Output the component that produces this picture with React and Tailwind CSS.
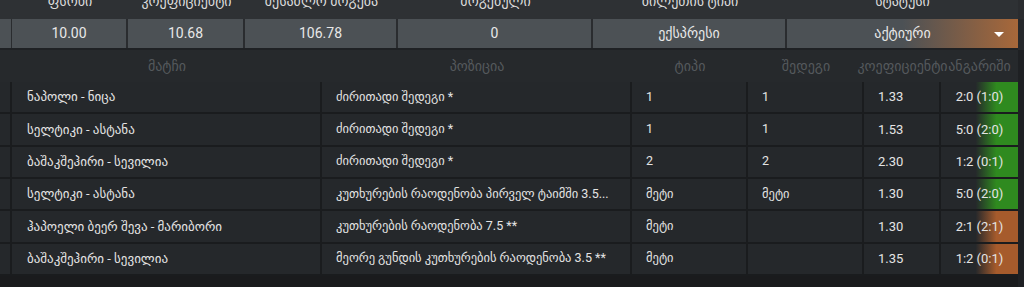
const font = { fontFamily: '"Liberation Sans Narrow", Roboto, "DejaVu Sans", sans-serif' }

const heads = [
    { label: 'ფსონი', w: 'w-[116px]' },
    { label: 'კოეფიციენტი', w: 'w-[117px]' },
    { label: 'შესაძლო მოგება', w: 'w-[153px]' },
    { label: 'მოგებული', w: 'w-[195px]' },
    { label: 'ბილეთის ტიპი', w: 'w-[194px]' },
]
const summary = ['10.00', '10.68', '106.78', '0', 'ექსპრესი']

const rows = [
    ['ნაპოლი - ნიცა', 'ძირითადი შედეგი *', '1', '1', '1.33', '2:0 (1:0)', 'win'],
    ['სელტიკი - ასტანა', 'ძირითადი შედეგი *', '1', '1', '1.53', '5:0 (2:0)', 'win'],
    ['ბაშაკშეჰირი - სევილია', 'ძირითადი შედეგი *', '2', '2', '2.30', '1:2 (0:1)', 'win'],
    ['სელტიკი - ასტანა', 'კუთხურების რაოდენობა პირველ ტაიმში 3.5...', 'მეტი', 'მეტი', '1.30', '5:0 (2:0)', 'win'],
    ['ჰაპოელი ბეერ შევა - მარიბორი', 'კუთხურების რაოდენობა 7.5 **', 'მეტი', '', '1.30', '2:1 (2:1)', 'lose'],
    ['ბაშაკშეჰირი - სევილია', 'მეორე გუნდის კუთხურების რაოდენობა 3.5 **', 'მეტი', '', '1.35', '1:2 (0:1)', 'lose'],
]

function Row({ r }) {
    const cell = 'h-full flex items-center pl-[14px] border-r-2 border-[#1a1c1e] whitespace-nowrap overflow-hidden'
    return (
        <div className="flex h-[32.33px] border-b-2 border-[#1a1c1e] bg-[#25282b] text-[12.5px] text-[#e4e4e4]">
            <div className="w-[12px] h-full border-r-2 border-[#1a1c1e]" />
            <div className={`${cell} w-[310px] pl-[15px] text-[13px]`}>{r[0]}</div>
            <div className={`${cell} w-[310px]`}>{r[1]}</div>
            <div className={`${cell} w-[116px]`}>{r[2]}</div>
            <div className={`${cell} w-[116px]`}>{r[3]}</div>
            <div className={`${cell} w-[77px] text-[13px]`}>{r[4]}</div>
            <div
                className={`h-full w-[77px] flex items-center justify-center text-[13px] ${r[6] === 'win'
                    ? 'bg-[linear-gradient(90deg,#25282b_45%,#2f8a1f_72%,#2f8a1f)]'
                    : 'bg-[linear-gradient(90deg,#25282b_45%,#a65b2c_72%,#a65b2c)]'}`}
            >
                {r[5]}
            </div>
        </div>
    )
}

export default function App() {
    return (
        <div className="w-[1024px] h-[287px] overflow-hidden bg-[#1c1d1f] flex" style={font}>
            <div className="w-[1018px] flex flex-col">
                <div className="flex h-[19px] bg-[#2e3134] text-[14px] text-[#dcdcdc] overflow-hidden">
                    <div className="w-[12px]" />
                    {heads.map(h => (
                        <div key={h.label} className={`${h.w} flex justify-center whitespace-nowrap -mt-[9px]`}>{h.label}</div>
                    ))}
                    <div className="flex-1 flex justify-center whitespace-nowrap -mt-[9px]">სტატუსი</div>
                </div>
                <div className="flex h-[31px] bg-[#4c5155] text-[14px] text-[#e8e8e8] border-b-2 border-[#1f2124]">
                    <div className="w-[12px] border-r border-[#2a2c2f]" />
                    {summary.map((s, i) => (
                        <div key={i} className={`${heads[i].w} flex items-center justify-center border-r-2 border-[#2a2c2f]`}>{s}</div>
                    ))}
                    <div className="flex-1 relative flex items-center justify-center bg-[linear-gradient(90deg,#4c5155_50%,#a8683a_100%)]">
                        აქტიური
                        <span className="absolute right-[14px] top-[13px] w-0 h-0 border-l-[5px] border-r-[5px] border-t-[5px] border-l-transparent border-r-transparent border-t-white" />
                    </div>
                </div>
                <div className="flex h-[32px] bg-[#26292c] text-[14px] text-[#55595d] items-center whitespace-nowrap">
                    <div className="w-[12px]" />
                    <div className="w-[310px] text-center">მატჩი</div>
                    <div className="w-[310px] text-center">პოზიცია</div>
                    <div className="w-[116px] text-center">ტიპი</div>
                    <div className="w-[116px] text-center">შედეგი</div>
                    <div className="w-[77px] flex justify-center">კოეფიციენტი</div>
                    <div className="w-[77px] flex justify-center">ანგარიში</div>
                </div>
                {rows.map((r, i) => <Row key={i} r={r} />)}
                <div className="flex-1 bg-[#1a1b1d]" />
            </div>
            <div className="flex-1 flex flex-col">
                <div className="h-[19px] bg-[#2a2c2f]" />
                <div className="h-[31px] bg-[#26282b]" />
                <div className="flex-1 bg-[#1e2023]" />
            </div>
        </div>
    )
}
